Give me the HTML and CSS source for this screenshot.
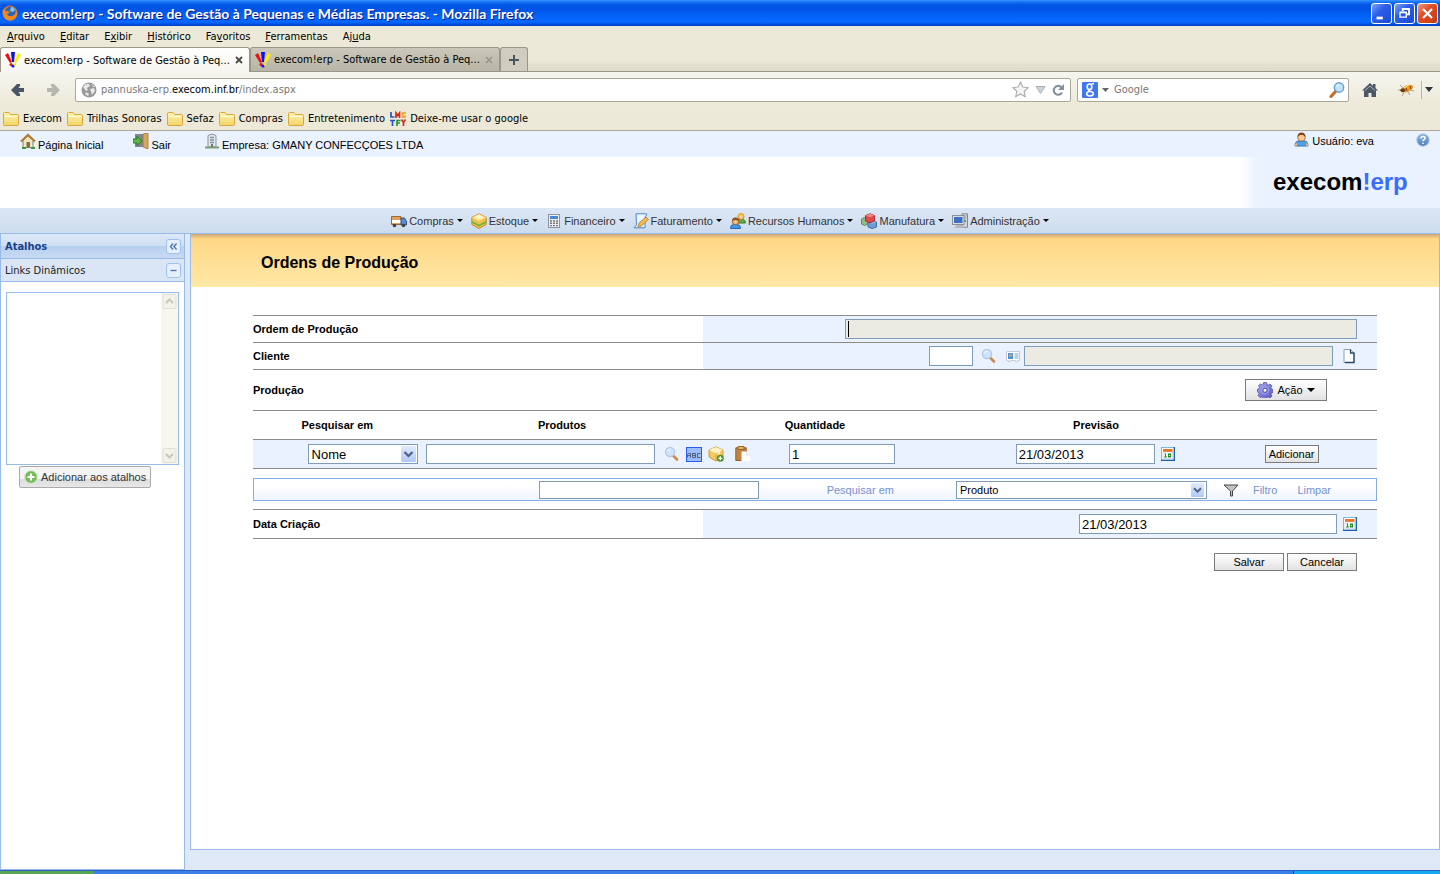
FILE: index.html
```html
<!DOCTYPE html>
<html lang="pt-BR">
<head>
<meta charset="utf-8">
<title>execom!erp - Software de Gestão à Pequenas e Médias Empresas.</title>
<link rel="stylesheet" href="styles.css">
</head>
<body>
<svg class="defs" aria-hidden="true">
  <defs>
    <linearGradient id="gFolder" x1="0" y1="0" x2="0" y2="1"><stop offset="0" stop-color="#fff3b0"/><stop offset="1" stop-color="#f3d468"/></linearGradient>
    <linearGradient id="gArrow" x1="0" y1="0" x2="0" y2="1"><stop offset="0" stop-color="#e1eafe"/><stop offset="1" stop-color="#aec8f7"/></linearGradient>
    <linearGradient id="gHelp" x1="0" y1="0" x2="0" y2="1"><stop offset="0" stop-color="#8fb6e0"/><stop offset="1" stop-color="#4a7fc0"/></linearGradient>
    <linearGradient id="gGear" x1="0" y1="0" x2="1" y2="1"><stop offset="0" stop-color="#a9abf4"/><stop offset="1" stop-color="#5356b8"/></linearGradient>
  </defs>
  <symbol id="folder" viewBox="0 0 16 16"><path d="M.5 2.500q0-1 1-1h4.500l1.500 2h7q1 0 1 1v9q0 1-1 1h-13q-1 0-1-1z" fill="url(#gFolder)" stroke="#d9a83c"/><path d="M2 5.500h12.500" stroke="#fffbe0"/></symbol>
  <symbol id="favicon" viewBox="0 0 16 16"><path d="M0 3l3-2 4 9-2 1z" fill="#f01010"/><path d="M6 0h4L9 10H7z" fill="#1010e8"/><path d="M13 1l3 2-5 8-2-1z" fill="#fff000"/><circle cx="6" cy="12.500" r="1.500" fill="#f01010"/><circle cx="8" cy="14" r="1.600" fill="#1010e8"/><circle cx="10" cy="12.500" r="1.300" fill="#fff000"/></symbol>
  <symbol id="chev" viewBox="0 0 15 16"><rect width="15" height="16" rx="1.500" fill="url(#gArrow)"/><path d="M3.500 6l4 4 4-4" fill="none" stroke="#4d6185" stroke-width="2.200"/></symbol>
  <symbol id="lens" viewBox="0 0 16 16"><path d="M9 9.500l4 4" stroke="#c98a4a" stroke-width="2.600" stroke-linecap="round"/><circle cx="6" cy="6" r="4.500" fill="#cfe4fb" stroke="#b3caec" stroke-width="1.300"/><path d="M3.500 5q1-2 3-2" stroke="#fff" fill="none"/></symbol>
  <symbol id="cal" viewBox="0 0 14 14"><path d="M0 0h14v14H0z" fill="#7db8ea"/><path d="M12.500 0H14v14H0v-1.500h12.500z" fill="#1d5fb0"/><path d="M1 1h11.500v11.500H1z" fill="#fff"/><path d="M2 2h9.500v3H2z" fill="#f0721c"/><path d="M2 5h9.500v6.500H2z" fill="#fff" stroke="#c3ccd4" stroke-width=".6"/><path d="M4.500 6.500V10M3 10h3M3.500 7h1" stroke="#1f8f2c" fill="none"/><rect x="7.500" y="7" width="2" height="3" fill="none" stroke="#1f8f2c"/></symbol>
</svg>

<header class="titlebar">
  <svg class="ic16" viewBox="0 0 16 16"><circle cx="8" cy="8" r="7.500" fill="#e8731a"/><circle cx="8.500" cy="6.500" r="5" fill="#2c65b4"/><path d="M1 4q2 3 5 2l2 1-3 2q2 4 8 1l2-4q1 6-4 9-6 2-9-3-2-4-1-8z" fill="#f08a1d"/><path d="M9 2q3 0 4 3l-2 2-3-1z" fill="#83c3ea"/></svg>
  <span class="title-text">execom!erp - Software de Gestão à Pequenas e Médias Empresas. - Mozilla Firefox</span>
  <button class="win" aria-label="Minimizar"><svg viewBox="0 0 21 21"><path d="M5 15.500h7" stroke="#fff" stroke-width="3"/></svg></button>
  <button class="win" aria-label="Restaurar"><svg viewBox="0 0 21 21"><path d="M8.500 8V5.500h7v6H13M8.500 5.500h7" fill="none" stroke="#fff" stroke-width="2"/><path d="M5.500 9.500h7v5h-7zM5 9h8" fill="none" stroke="#fff" stroke-width="1.500"/></svg></button>
  <button class="win close" aria-label="Fechar"><svg viewBox="0 0 21 21"><path d="M5.500 5.500l10 10M15.500 5.500l-10 10" stroke="#fff" stroke-width="2.300"/></svg></button>
</header>

<nav class="menubar">
  <button><u>A</u>rquivo</button><button><u>E</u>ditar</button><button>E<u>x</u>ibir</button><button><u>H</u>istórico</button><button>Fa<u>v</u>oritos</button><button><u>F</u>erramentas</button><button>Aj<u>u</u>da</button>
</nav>

<div class="tabs">
  <div class="tab active"><svg class="ic16"><use href="#favicon"/></svg><span>execom!erp - Software de Gestão à Peq...</span><button class="x" aria-label="Fechar aba"><svg viewBox="0 0 8 8"><path d="M1 1l6 6M7 1L1 7" stroke="#4a4a4a" stroke-width="1.800"/></svg></button></div>
  <div class="tab"><svg class="ic16"><use href="#favicon"/></svg><span>execom!erp - Software de Gestão à Peq...</span><button class="x" aria-label="Fechar aba"><svg viewBox="0 0 8 8"><path d="M1 1l6 6M7 1L1 7" stroke="#96948a" stroke-width="1.500"/></svg></button></div>
  <button class="newtab" aria-label="Nova aba"><svg viewBox="0 0 12 12"><path d="M6 1v10M1 6h10" stroke="#4a5563" stroke-width="2"/></svg></button>
</div>

<div class="toolbar">
  <button class="back" aria-label="Voltar"><svg class="ic16" viewBox="0 0 16 16"><path d="M1 8l6-6h3v2L8.500 6H14v4H8.500L10 12v2H7z" fill="#4a5666"/></svg></button>
  <button class="fwd" aria-label="Avançar"><svg class="ic16" viewBox="0 0 16 16"><path d="M14 8L8 2H5v2l1.500 2H1v4h5.500L5 12v2h3z" fill="#b6b6ae"/></svg></button>
  <div class="field url">
    <svg class="ic16" viewBox="0 0 16 16"><circle cx="8" cy="8" r="7.500" fill="#999"/><path d="M2 5q3-4 6-3l1 2-3 2 1 2-2 1zM9 7l4-1 1 3-3 4-1-3zM5 10l3 2-1 2-3-2zM11 2l3 3-2 0z" fill="#e8e8e8"/></svg>
    <a href="#">pannuska-erp.<b>execom.inf.br</b>/index.aspx</a>
    <svg class="star" viewBox="0 0 16 16"><path d="M8 1l2.200 4.600 5 .6-3.700 3.500 1 5L8 12.200l-4.500 2.500 1-5L.8 6.200l5-.6z" fill="#f4f4f4" stroke="#aaa"/></svg>
    <svg class="tri" viewBox="0 0 10 8"><path d="M.5.5h9L5 7.500z" fill="#ccd2da" stroke="#a9b0ba"/></svg>
    <svg class="reload" viewBox="0 0 12 12"><path d="M9.500 3.500A4.400 4.400 0 1 0 10 8.500" fill="none" stroke="#87919e" stroke-width="2.200"/><path d="M12 0v6H6z" fill="#87919e"/></svg>
  </div>
  <div class="field search">
    <svg class="ic16" viewBox="0 0 16 16"><rect width="16" height="16" rx="1" fill="#4079ee"/><ellipse cx="7.500" cy="4.800" rx="2.300" ry="2.800" fill="none" stroke="#fff" stroke-width="1.600"/><path d="M9.500 2l2.500-.5M7.500 7.800q-2.500 1.200.8 1.800" fill="none" stroke="#fff" stroke-width="1.300"/><ellipse cx="8" cy="11.800" rx="3.300" ry="2.200" fill="none" stroke="#fff" stroke-width="1.500"/></svg>
    <svg class="caret" viewBox="0 0 7 4"><path d="M0 0h7L3.500 4z" fill="#666"/></svg>
    <input type="text" placeholder="Google" aria-label="Pesquisa">
    <svg class="ic16" viewBox="0 0 16 16"><path d="M6.500 9.500L2 14.500" stroke="#c06a28" stroke-width="3" stroke-linecap="round"/><circle cx="10" cy="5.500" r="4.700" fill="#bfe3fb" stroke="#6a9ed0" stroke-width="1.400"/><path d="M7.500 5q1-2.500 3-2" stroke="#fff" fill="none"/></svg>
  </div>
  <button class="home" aria-label="Início"><svg class="ic16" viewBox="0 0 16 16"><path d="M8 1L0 8.500h2V15h4.500v-4h3v4H14V8.500h2L13.500 6V2H11v1.700z" fill="#4b5868"/><path d="M3 8.500L8 4l5 4.500" stroke="#aab3bd" fill="none"/></svg></button>
  <button class="bug" aria-label="Firebug"><svg class="ic16" viewBox="0 0 16 16"><path d="M2 3l3 3M0 8h4M4 14l2-4M10 10l2 3M12 8l4 1" stroke="#a9a08c"/><ellipse cx="9.500" cy="6.500" rx="6" ry="3.200" fill="#e89a20" transform="rotate(-25 9.500 6.500)"/><path d="M6 6l5-3" stroke="#ffd878" stroke-width="1.300"/><ellipse cx="4.800" cy="8.200" rx="2.400" ry="2" fill="#6b3a10"/><path d="M8 6l1 3M12 4l1 3" stroke="#8a3c0c"/></svg></button>
  <span class="sep"></span>
  <svg class="dd" viewBox="0 0 8 5"><path d="M0 0h8L4 5z" fill="#2e3640"/></svg>
</div>

<nav class="bookmarks">
  <a href="#"><svg class="ic16"><use href="#folder"/></svg>Execom</a>
  <a href="#"><svg class="ic16"><use href="#folder"/></svg>Trilhas Sonoras</a>
  <a href="#"><svg class="ic16"><use href="#folder"/></svg>Sefaz</a>
  <a href="#"><svg class="ic16"><use href="#folder"/></svg>Compras</a>
  <a href="#"><svg class="ic16"><use href="#folder"/></svg>Entretenimento</a>
  <a href="#"><svg class="ic16" viewBox="0 0 16 16"><g fill="none" stroke-width="1.700"><path d="M1 1v5h3.500" stroke="#2a50c8"/><path d="M6 7V2l1.700 2.500L9.500 2v5" stroke="#d82a1c"/><path d="M16 2h-3.500v4H15V4.500" stroke="#e8a020"/><path d="M0 9.500h5M2.500 9.500V15" stroke="#2a50c8"/><path d="M10.500 9.500H7V15M7 12h3" stroke="#28982c"/><path d="M11.500 8.500l2 3 2-3M13.500 11v4" stroke="#d82a1c"/></g></svg>Deixe-me usar o google</a>
</nav>

<div class="userbar">
  <a class="u-home" href="#"><svg class="ic16" viewBox="0 0 16 16"><path d="M3 7v7.500h10V7L8 2.500z" fill="#efe6c8" stroke="#7a8a68"/><path d="M1 8.500L8 2l7 6.500" fill="none" stroke="#b07a30" stroke-width="2.200"/><rect x="6.500" y="9" width="3.500" height="5.500" fill="#8a6a40"/><path d="M2 15h4M11 15h4" stroke="#3a9a3a" stroke-width="2"/></svg>Página Inicial</a>
  <a class="u-exit" href="#"><svg class="ic16" viewBox="0 0 16 16"><rect x="2" y="1" width="8" height="13" fill="#7d8791"/><path d="M10 1l5-1v16l-5-2z" fill="#d9a75a" stroke="#a8722c" stroke-width=".8"/><path d="M0 6h4V3l5 5-5 4.500V10H0z" fill="#5fb548" stroke="#317a28"/></svg>Sair</a>
  <span class="u-firm"><svg class="ic16" viewBox="0 0 16 16"><path d="M4 2.500l4-1.500 4 1.500V14H4z" fill="#e4e8ea" stroke="#8b9499"/><path d="M6 4.500h4M6 7h4M6 9.500h4" stroke="#7d94aa" stroke-width="1.300"/><path d="M1 14.500h14" stroke="#7aa070" stroke-width="2"/><rect x="7" y="11" width="2" height="3" fill="#777"/></svg>Empresa: GMANY CONFECÇOES LTDA</span>
  <span class="u-user"><svg class="ic16" viewBox="0 0 16 16"><path d="M1 14q0-5 4-5h5q4 0 4 5z" fill="#4aa4ee" stroke="#2c72bc"/><path d="M1 12l2-1v3H1zM14 12l-2-1v3h2z" fill="#f0b070"/><circle cx="7.500" cy="5.500" r="3.800" fill="#f6c890" stroke="#9a6230" stroke-width=".8"/><path d="M3.500 5q0-4.500 4-4.500t4 4.500L9 3H6z" fill="#7d451c"/></svg>Usuário: eva</span>
  <button class="u-help" aria-label="Ajuda"><svg viewBox="0 0 16 16"><circle cx="8" cy="8" r="7" fill="url(#gHelp)" stroke="#9db6d6"/><path d="M5.700 6.300q0-2.300 2.300-2.300t2.300 2q0 1.200-2.200 2.500v1M8 11v1.500" fill="none" stroke="#fff" stroke-width="1.700"/></svg></button>
</div>

<div class="brand"><div class="brand-box"><span>execom</span><span class="blue">!erp</span></div></div>

<nav class="appmenu">
  <button><svg class="ic16" viewBox="0 0 16 16"><path d="M.5 3.500h9.500v8H.5z" fill="#e2a05a" stroke="#9c6a34"/><path d="M1 7h9v3H1z" fill="#fff"/><path d="M10 5h3.500l2 3.500v3.500H10z" fill="#5a8ed0" stroke="#33507c"/><circle cx="3.500" cy="12.500" r="1.800" fill="#444"/><circle cx="12.500" cy="12.500" r="1.800" fill="#444"/></svg>Compras<i></i></button>
  <button><svg class="ic16" viewBox="0 0 16 16"><path d="M8 .8l7.200 3.700v7L8 15.500.8 11.500v-7z" fill="#f2c24e" stroke="#c28f20"/><path d="M8 1l7 3.500L8 8 1 4.500z" fill="#ffe69a"/><path d="M1 8l7 3.500L15 8v2l-7 3.500L1 10z" fill="#74b33a"/><path d="M5 4l3-2 4 2-4 2z" fill="#fff8d8"/></svg>Estoque<i></i></button>
  <button><svg class="ic16" viewBox="0 0 16 16"><rect x="2.500" y="1.500" width="11" height="13" fill="#eceff2" stroke="#8d949c"/><rect x="4" y="3" width="8" height="3" fill="#4b86d6"/><path d="M4 8h8M4 10.300h8M4 12.600h8" stroke="#777" stroke-width="1.400" stroke-dasharray="2 1"/></svg>Financeiro<i></i></button>
  <button><svg class="ic16" viewBox="0 0 16 16"><path d="M3 .8h10.500v1l-1.500 3v10H1L3.500 12z" fill="#edf5ff" stroke="#4a88cc"/><path d="M5 12l1-4 7-6 2.500 2.500-7 6.500z" fill="#efbb50" stroke="#b07c22" stroke-width=".8" transform="translate(0 2)"/></svg>Faturamento<i></i></button>
  <button><svg class="ic16" viewBox="0 0 16 16"><path d="M6 10q0-3.500 3-3.500h3.500q3 0 3 3.500z" fill="#58ae48" stroke="#37802c"/><circle cx="11" cy="3.500" r="3" fill="#f4cf8e" stroke="#bb8130"/><path d="M8 3q0-3 3-3t3 3l-3-1z" fill="#eeb52e"/><path d="M.5 15.500q0-4 3-4h4q3 0 3 4z" fill="#3f98e8" stroke="#2868b0"/><circle cx="5.500" cy="8.500" r="3.200" fill="#f3bd84" stroke="#9a5c28"/><path d="M2 8q0-3.500 3.500-3.500T9 8L5.500 7z" fill="#9a4f1e"/></svg>Recursos Humanos<i></i></button>
  <button><svg class="ic16" viewBox="0 0 16 16"><path d="M.5 6l3-1.500L7 6v5l-3.500 1.500-3-1.500z" fill="#8fbd8a" stroke="#5c8e5a"/><path d="M7 9l4-1.500L15.500 9v5l-4.500 1.500L7 14z" fill="#6d9dd4" stroke="#3e6ca6"/><path d="M7 9l4 1.500L15.500 9 11 7.500z" fill="#a6c8ec"/><path d="M4.500 2.500L9 .8l4.500 1.700v5.500L9 9.800 4.500 8z" fill="#e0484c" stroke="#ad2c34"/><path d="M4.500 2.500L9 4.200l4.500-1.700L9 .8z" fill="#f28a88"/></svg>Manufatura<i></i></button>
  <button><svg class="ic16" viewBox="0 0 16 16"><path d="M10 .8h5.500v13.500H10z" fill="#d3d6d8" stroke="#888"/><path d="M11.500 3h3M11.500 5h3" stroke="#999"/><path d="M13 7v2" stroke="#32b432" stroke-width="2"/><rect x=".5" y="2.500" width="11.500" height="9" fill="#dcdfe2" stroke="#8b9096"/><rect x="2" y="4" width="8.500" height="6" fill="#3d6fc4"/><path d="M4 12h5v1.500h2V15H2.500v-1.500H4z" fill="#b4b8bc"/></svg>Administração<i></i></button>
</nav>

<div class="workspace">
  <aside class="sidebar">
    <div class="side-head"><strong>Atalhos</strong><button class="tool" aria-label="Recolher painel"><svg viewBox="0 0 15 15"><path d="M7 4L4 7.500 7 11M11 4L8 7.500l3 3.500" fill="none" stroke="#4873b0" stroke-width="1.500"/></svg></button></div>
    <div class="side-sub"><span>Links Dinâmicos</span><button class="tool" aria-label="Recolher links"><svg viewBox="0 0 15 15"><path d="M4 7.500h7" stroke="#4873b0" stroke-width="1.500"/></svg></button></div>
    <div class="side-body">
      <div class="listbox">
        <select size="8" aria-label="Links Dinâmicos"></select>
        <div class="scroll">
          <svg viewBox="0 0 16 17"><rect x="1.500" y="1.500" width="13" height="14" rx="1" fill="#f3f2ea" stroke="#e0dfd2"/><path d="M4.500 10L8 6.500l3.500 3.500" fill="none" stroke="#c9c7ba" stroke-width="2"/></svg>
          <svg viewBox="0 0 16 17"><rect x="1.500" y="1.500" width="13" height="14" rx="1" fill="#f3f2ea" stroke="#e0dfd2"/><path d="M4.500 7L8 10.500 11.500 7" fill="none" stroke="#c9c7ba" stroke-width="2"/></svg>
        </div>
      </div>
      <button class="add-link"><svg viewBox="0 0 14 14"><circle cx="7" cy="7" r="6" fill="#6fbb55" stroke="#a8d898"/><path d="M7 3.500v7M3.500 7h7" stroke="#fff" stroke-width="2.200"/></svg>Adicionar aos atalhos</button>
    </div>
  </aside>

  <main class="main">
    <div class="page-head"><h1>Ordens de Produção</h1></div>
    <form class="form">
      <div class="row">
        <label for="ordem">Ordem de Produção</label>
        <div class="val"><input id="ordem" class="off with-caret" type="text" readonly></div>
      </div>
      <div class="row last">
        <label for="cliente">Cliente</label>
        <div class="val client">
          <input id="cliente" class="code" type="text">
          <button type="button" class="ib" aria-label="Pesquisar cliente"><svg class="ic16"><use href="#lens"/></svg></button>
          <button type="button" class="ib card" aria-label="Ficha do cliente"><svg class="ic16" viewBox="0 0 16 16"><path d="M1.500 3.500h13v9h-2v1.300h-2v-1.300h-5v1.300h-2v-1.300h-2z" fill="#fff" stroke="#c8ccd2"/><rect x="3" y="5" width="5" height="6" fill="#4d93d8"/><circle cx="5.500" cy="7.200" r="1.500" fill="#dba060"/><path d="M9.500 6h4M9.500 8h4M9.500 10h4" stroke="#7aa0cc"/></svg></button>
          <input class="off name" type="text" readonly aria-label="Nome do cliente">
          <button type="button" class="ib" aria-label="Novo cliente"><svg class="ic16" viewBox="0 0 16 16"><path d="M3 1.500h6.500l3.500 3.500v9.500H3z" fill="#fff" stroke="#8aa0bc"/><path d="M9.500 1.500V5H13v9.500H4" fill="none" stroke="#25486c" stroke-width="1.300"/></svg></button>
        </div>
      </div>

      <div class="section"><h2>Produção</h2>
        <button type="button" class="btn action"><svg class="ic16" viewBox="0 0 16 16"><path d="M6.500.5h3l.4 2 1.300.6 1.800-1.100 2 2-1.100 1.800.6 1.300 2 .4v3l-2 .4-.6 1.300 1.100 1.800-2 2-1.800-1.100-1.300.6-.4 2h-3l-.4-2-1.300-.6L3 15.500l-2-2 1.100-1.800L1.500 10.500l-1-.4v-3l1.500-.4.6-1.300L1.500 3.800l2-2 1.700 1.300 1-.6z" fill="url(#gGear)" stroke="#4546a0" stroke-width=".7"/><circle cx="8" cy="8.300" r="3.600" fill="none" stroke="#9c9eec"/><circle cx="8" cy="8.300" r="2" fill="#f4f4f8" stroke="#4546a0" stroke-width=".8"/></svg>Ação<i></i></button>
      </div>

      <table class="items">
        <thead><tr><th>Pesquisar em</th><th>Produtos</th><th>Quantidade</th><th>Previsão</th><th></th></tr></thead>
        <tbody><tr>
          <td class="c-sel"><span class="combo big"><select aria-label="Pesquisar em"><option>Nome</option></select><svg><use href="#chev"/></svg></span></td>
          <td class="c-prod"><input type="text" aria-label="Produtos">
            <button type="button" class="ib" aria-label="Pesquisar produto"><svg class="ic16"><use href="#lens"/></svg></button>
            <button type="button" class="ib" aria-label="Pesquisa textual"><svg class="ic16" viewBox="0 0 16 16"><path d="M0 1h16v15H0z" fill="#2a5cf0"/><path d="M1 2h14v13H1z" fill="#9dbcfa"/><path d="M1.500 11.500v-3l1-1h2v4M1.500 9.500h3M6.500 7v4.500h3v-4h-3M6.500 9.500h3M14.500 7.500h-3v4h3" fill="none" stroke="#55607a"/></svg></button>
            <button type="button" class="ib" aria-label="Novo produto"><svg class="ic16" viewBox="0 0 16 16"><path d="M8 .8L15 4v7l-7 4-7-4V4z" fill="#f4c864" stroke="#ce9a34"/><path d="M8 1l7 3-7 3.500L1 4z" fill="#ffefb8"/><path d="M8 7.500v7" stroke="#dca840"/><path d="M4 3l7 3v2.500" stroke="#fff6d8" stroke-width="1.500" fill="none"/><circle cx="12.300" cy="12.300" r="3.500" fill="#4d942c"/><path d="M12.300 10.300v4M10.300 12.300h4" stroke="#fff" stroke-width="1.300"/></svg></button>
            <button type="button" class="ib paste" aria-label="Colar"><svg class="ic16" viewBox="0 0 16 16"><path d="M.8 1.800h10.400v12.700H.8z" fill="#c08440" stroke="#94602a"/><path d="M3 .5h6v3H3z" fill="#e4b264" stroke="#98642a"/><path d="M6.500 5.500h5.500l3.500 3.500v6h-9z" fill="#fff"/><path d="M12 5.500V9h3.500" fill="none" stroke="#dcdcdc"/></svg></button></td>
          <td class="c-qty"><input type="text" value="1" aria-label="Quantidade"></td>
          <td class="c-date"><input type="text" value="21/03/2013" aria-label="Previsão"><button type="button" class="ib calb" aria-label="Calendário"><svg><use href="#cal"/></svg></button></td>
          <td class="c-add"><button type="button" class="btn">Adicionar</button></td>
        </tr></tbody>
      </table>

      <div class="filter">
        <input type="text" aria-label="Texto do filtro">
        <label for="fsel">Pesquisar em</label>
        <span class="combo"><select id="fsel"><option>Produto</option></select><svg><use href="#chev"/></svg></span>
        <svg class="ic16 funnel" viewBox="0 0 16 16"><path d="M1 3h14L9.500 9v5h-2V9z" fill="#c4c4c4" stroke="#444"/></svg>
        <a href="#">Filtro</a><a href="#">Limpar</a>
      </div>

      <div class="row last created">
        <label for="criacao">Data Criação</label>
        <div class="val"><input id="criacao" type="text" value="21/03/2013"><button type="button" class="ib calb" aria-label="Calendário"><svg><use href="#cal"/></svg></button></div>
      </div>

      <div class="actions"><button type="button" class="btn">Salvar</button><button type="button" class="btn">Cancelar</button></div>
    </form>
  </main>
</div>
<footer class="taskbar"><span class="start"></span><span class="tasks"></span><span class="tray"></span></footer>
</body>
</html>
```

FILE: styles.css
```css
* { box-sizing: border-box; }
body {
  margin: 0;
  height: 100vh;
  overflow: hidden;
  display: flex;
  flex-direction: column;
  background: #dfe8f6;
  color: #000;
  font: 11px "Liberation Sans", Arial, sans-serif;
}
button, input, select { font: inherit; color: inherit; margin: 0; }
button { border: 0; padding: 0; background: none; white-space: nowrap; }
a { color: inherit; text-decoration: none; }
svg { display: block; flex: none; }
.defs { position: absolute; width: 0; height: 0; }
.ic16 { width: 16px; height: 16px; }

/* Browser window */
.titlebar, .menubar, .tabs, .toolbar, .bookmarks {
  flex: none;
  display: flex;
  align-items: center;
  font-family: "DejaVu Sans Condensed", Tahoma, sans-serif;
}
.titlebar {
  height: 26px;
  padding: 0 2px;
  gap: 2px;
  background: linear-gradient(#3d95ff 0, #1472f5 2px, #0355e6 5px, #0054e3 9px, #0464fc 17px, #0768ff 22px, #0040c8 26px);
}
.title-text {
  flex: 1;
  padding-left: 2px;
  color: #fff;
  font: bold 14px Lato, "Trebuchet MS", sans-serif;
  text-shadow: 1px 1px 0 #0a1883;
}
.win {
  width: 21px;
  height: 21px;
  border: 1px solid #fff;
  border-radius: 3px;
  background: linear-gradient(135deg, #7fa4f7, #2c5ee8 40%, #1b4ad4);
}
.win svg { width: 19px; height: 19px; }
.win.close { background: linear-gradient(135deg, #f09a80, #e04e24 40%, #c63a10); }
.menubar { height: 21px; padding-left: 7px; gap: 15px; background: #ece9d8; }
.tabs {
  height: 25px;
  background: linear-gradient(#ece9d8 50%, #dedac9);
  border-bottom: 1px solid #99968a;
  align-items: stretch;
}
.tab {
  width: 250px;
  display: flex;
  align-items: center;
  gap: 3px;
  padding: 0 6px 0 4px;
  border: 1px solid #99968a;
  border-bottom: 0;
  border-radius: 3px 3px 0 0;
  background: linear-gradient(#cbc8b9, #b8b5a6);
}
.tab.active { background: linear-gradient(#fff, #f6f5ee); margin-bottom: -1px; }
.tab span { flex: 1; white-space: nowrap; }
.x svg { width: 8px; height: 8px; }
.newtab { width: 28px; border: 1px solid #99968a; border-bottom: 0; border-radius: 3px 3px 0 0; background: #d0cdbe; display: grid; place-items: center; }
.newtab svg { width: 12px; height: 12px; }
.toolbar { height: 35px; padding: 0 7px 0 10px; background: linear-gradient(#f6f5ee, #ece9d8); }
.fwd { margin: 0 13px 0 20px; }
.field { display: flex; align-items: center; height: 24px; background: #fff; border: 1px solid #aaa79b; border-radius: 2px; color: #777; }
.url { flex: 1; padding: 0 6px 0 5px; gap: 4px; }
.url a { flex: 1; }
.url b { font-weight: normal; color: #000; }
.star { width: 17px; height: 17px; }
.tri { width: 11px; height: 8px; margin-left: 2px; }
.reload { width: 12px; height: 12px; margin-left: 2px; }
.search { width: 272px; margin: 0 13px 0 6px; padding: 0 3px 0 4px; }
.search input { flex: 1; min-width: 0; border: 0; padding: 0; background: none; outline: 0; }
.search input::placeholder { color: #777; opacity: 1; }
.caret { width: 7px; height: 4px; margin: 0 5px 0 4px; }
.bug { margin-left: 20px; }
.sep { width: 1px; height: 18px; margin: 0 3px 0 7px; background: #b8b5a8; }
.dd { width: 8px; height: 5px; }
.bookmarks { height: 24px; padding: 0 3px; gap: 5px; background: #ece9d8; border-bottom: 1px solid #aca899; }
.bookmarks a { display: flex; align-items: center; gap: 4px; }

/* Application header */
.userbar { flex: none; height: 26px; display: flex; align-items: flex-start; padding: 2px 10px 0 20px; background: #eaf2ff; }
.userbar a, .userbar span { display: flex; align-items: flex-end; gap: 2px; height: 18px; }
.userbar .ic16 { align-self: flex-start; }
.u-exit { margin-left: 30px; }
.u-firm { margin-left: 33px; }
.userbar .u-user { height: 15px; margin: -1px 42px 0 auto; }
.u-help svg { width: 14px; height: 14px; }
.brand { flex: none; height: 51px; display: flex; justify-content: flex-end; background: #fff; }
.brand-box {
  width: 200px;
  padding: 11px 0 0 33px;
  background: linear-gradient(90deg, #fff, #eaf2ff 18px);
  font: bold 24px "Liberation Sans", Arial, sans-serif;
}
.blue { color: #3a6cff; }
.appmenu {
  flex: none;
  height: 26px;
  display: flex;
  align-items: center;
  justify-content: center;
  gap: 8px;
  border-bottom: 1px solid #99bbe8;
  background: linear-gradient(#dce7f5, #cddcee);
  color: #333;
}
.appmenu button { display: flex; align-items: center; gap: 2px; }
.appmenu i, .action i { border: solid transparent; border-width: 3px 3px 0; border-top-color: #000; margin-left: 1px; }

/* Sidebar */
.workspace { flex: 1; min-height: 0; display: flex; gap: 5px; }
.sidebar {
  flex: none;
  width: 185px;
  border: 1px solid #99bbe8;
  border-top: 0;
  background: #fff;
  font-family: "DejaVu Sans Condensed", Tahoma, sans-serif;
}
.side-head, .side-sub { display: flex; align-items: center; justify-content: space-between; padding: 0 3px 0 4px; border-bottom: 1px solid #99bbe8; }
.side-head { height: 25px; color: #15428b; background: linear-gradient(#dce8f7 0, #cfdff3 48%, #b8cfee 50%, #c8daf2 100%); }
.side-sub { height: 23px; background: #dae6f6; color: #222; }
.tool { width: 15px; height: 15px; background: #e6f0fd; border: 1px solid #a0c1ec; border-radius: 3px; }
.tool svg { width: 13px; height: 13px; }
.side-body { padding: 10px 5px; }
.listbox { height: 173px; border: 1px solid #99bbe8; display: flex; }
.listbox select { flex: 1; border: 0; outline: 0; background: #fff; overflow: hidden; }
.scroll { width: 17px; display: flex; flex-direction: column; justify-content: space-between; background: #f7f6ef; }
.scroll svg { width: 17px; height: 17px; }
.add-link {
  display: flex;
  align-items: center;
  gap: 3px;
  height: 22px;
  margin: 1px 0 0 13px;
  padding: 0 4px;
  border: 1px solid #aaa;
  border-radius: 2px;
  background: linear-gradient(#f4f4f4 60%, #dcdcdc 62%, #e8e8e8);
  color: #333;
  font-family: "Liberation Sans", Arial, sans-serif;
}
.add-link svg { width: 14px; height: 14px; }

/* Order form */
.main { flex: 1; margin-bottom: 20px; border: 1px solid #99bbe8; border-top: 0; background: #fff; }
.page-head { height: 53px; padding: 19px 70px 0; background: linear-gradient(#c9a877 0, #ffd786 5px, #ffe8a6 100%); }
h1 { margin: 0; font-size: 16px; line-height: 19px; }
.form { padding: 28px 62px 0; }
.form label, h2, th { font-size: 11px; font-weight: bold; }
.row { display: flex; height: 27px; border-top: 1px solid #8b8b8b; }
.row.last { height: 28px; border-bottom: 1px solid #8b8b8b; }
.row label { width: 40%; align-self: center; }
.val { flex: 1; display: flex; align-items: center; justify-content: flex-end; padding-right: 20px; background: #eaf2ff; }
.form input { height: 20px; border: 1px solid #7f9db9; padding: 0 2px; background: #fff; font-size: 13px; outline: 0; }
.form .off { background: #ebebe4; }
#ordem { width: 512px; }
.form .with-caret { background: linear-gradient(#000, #000) 2px 1px / 1px 16px no-repeat #ebebe4; }
.ib { display: block; width: 16px; height: 16px; }
#cliente { width: 44px; margin-right: 8px; }
.card { margin: 0 3px 0 8px; }
.form .name { width: 309px; margin-right: 8px; }
.section { height: 40px; display: flex; align-items: center; justify-content: space-between; padding-right: 50px; }
h2 { margin: 0; }
.btn { height: 18px; border: 1px solid #7a7a7a; background: linear-gradient(#fff, #e2e2e2); }
.action { width: 82px; height: 22px; display: flex; align-items: center; justify-content: center; gap: 4px; }
.action i { border-width: 4px 4px 0; margin-left: 0; }
.items { display: block; }
.items thead, .items tbody { display: block; }
.items tr { display: grid; border-top: 1px solid #8b8b8b; align-items: center; }
.items th, .items td { padding: 0; }
thead tr { grid-template-columns: 15% 25% 20% 30% 10%; height: 29px; }
.items tbody tr { grid-template-columns: 15% 32.5% 20% 22.5% 10%; height: 30px; background: #eaf2ff; border-bottom: 1px solid #8b8b8b; }
.items td { display: flex; align-items: center; }
.items .c-sel { justify-content: flex-end; padding-right: 4px; }
.items .c-prod { padding-left: 4px; gap: 6px; }
.c-prod input { width: 229px; margin-right: 3px; }
.c-prod .paste { margin-left: 5px; }
.items .c-qty { padding-left: 2px; }
.c-qty input { width: 106px; }
.items .c-date { padding-left: 4px; }
.c-date input { width: 139px; }
.calb { width: 14px; height: 14px; margin-left: 6px; }
.calb svg { width: 14px; height: 14px; }
.c-add .btn { width: 54px; }
.combo { position: relative; display: block; }
.combo select { appearance: none; display: block; width: 251px; height: 18px; padding: 0 3px; border: 1px solid #7f9db9; border-radius: 0; background: #fff; }
.combo svg { position: absolute; right: 2px; top: 2px; width: 15px; height: 14px; pointer-events: none; }
.combo.big select { width: 110px; height: 20px; font-size: 13px; }
.combo.big svg { height: 16px; }
.filter {
  display: flex;
  align-items: center;
  justify-content: flex-end;
  height: 23px;
  margin: 9px 0 8px;
  padding-right: 45px;
  border: 1px solid #84aee8;
  background: linear-gradient(#fff 30%, #eef4ff);
  color: #7593cf;
}
.form .filter input { width: 220px; height: 18px; margin-right: 68px; color: #000; }
.form .filter label { font-weight: normal; margin-right: 62px; }
.filter select { color: #000; }
.funnel { margin: 0 14px 0 16px; }
.filter a + a { margin-left: 20px; }
.row.created { height: 30px; }
#criacao { width: 258px; }
.actions { display: flex; justify-content: flex-end; gap: 3px; padding: 14px 20px 0; }
.actions .btn { width: 70px; }

/* Taskbar */
.taskbar { flex: none; height: 4px; display: flex; background: #3a80e6; border-top: 1px solid #2a5fc8; }
.start { width: 94px; background: #55a552; }
.tasks { flex: 1; }
.tray { width: 147px; background: #14a8f0; border-left: 1px solid #0c3c78; }
```
